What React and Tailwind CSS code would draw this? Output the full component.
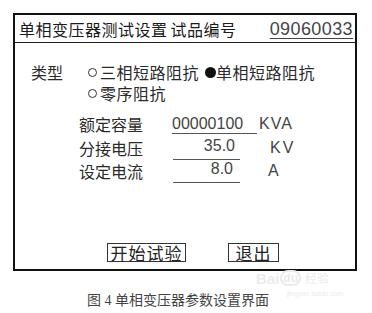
import React from "react";

const cjk = { fontFamily: '"Noto Sans CJK SC", "Noto Sans", sans-serif' };
const num = { fontFamily: '"Liberation Sans", Arial, sans-serif' };

function Hollow() {
  return <span className="inline-block w-[9px] h-[9px] rounded-full border border-[#333] mr-[3px]" />;
}

export default function App() {
  return (
    <div className="relative w-[372px] h-[313px] bg-white overflow-hidden" style={cjk}>
      <div className="pt-[13px] pl-[13px]">
        <div className="w-[344px] h-[258px] border-2 border-[#111] flex flex-col text-[#2a2a2a]">
          {/* header */}
          <div className="h-[28px] border-b border-[#222] flex items-center justify-between pl-[4px] pr-[2px]">
            <span className="text-[16px] tracking-[0.5px] leading-none text-[#1a1a1a]">
              单相变压器测试设置<span className="ml-[3px]">试品编号</span>
            </span>
            <span
              className="text-[18px] leading-none underline underline-offset-[3px] decoration-1 text-[#444] tracking-[0.4px]"
              style={num}
            >
              09060033
            </span>
          </div>

          {/* body */}
          <div className="flex flex-col flex-1 pt-[19px] text-[16px]">
            <div className="flex pl-[16px]">
              <span className="w-[57px] h-[20px] leading-[20px]">类型</span>
              <div className="flex flex-col gap-[1px]">
                <div className="flex items-center h-[20px] leading-[16px] tracking-[0.5px]">
                  <Hollow />
                  <span>三相短路阻抗</span>
                  <span className="inline-block w-[11px] h-[11px] rounded-full bg-[#111] ml-[6px]" />
                  <span>单相短路阻抗</span>
                </div>
                <div className="flex items-center h-[20px] leading-[16px] tracking-[0.5px]">
                  <Hollow />
                  <span>零序阻抗</span>
                </div>
              </div>
            </div>

            <div className="flex flex-col pl-[64px] mt-[9px]">
              <div className="flex items-center h-[24px] leading-[20px]">
                <span className="w-[93px]">额定容量</span>
                <span
                  className="w-[85px] h-[20px] leading-[19px] border-b border-[#555] text-[#444]"
                  style={num}
                >
                  00000100
                </span>
                <span className="ml-[2px] text-[#444] tracking-[1px]" style={num}>KVA</span>
              </div>
              <div className="flex items-center h-[23px] leading-[20px]">
                <span className="w-[94px]">分接电压</span>
                <span
                  className="w-[67px] h-[20px] mt-[4px] leading-[12px] border-b border-[#555] text-right pr-[5px] text-[#444]"
                  style={num}
                >
                  35.0
                </span>
                <span className="ml-[30px] text-[#444] tracking-[2px]" style={num}>KV</span>
              </div>
              <div className="flex items-center h-[24px] leading-[20px]">
                <span className="w-[94px]">设定电流</span>
                <span
                  className="w-[67px] h-[20px] mt-[4px] leading-[12px] border-b border-[#555] text-right pr-[7px] text-[#444]"
                  style={num}
                >
                  8.0
                </span>
                <span className="ml-[28px] text-[#444]" style={num}>A</span>
              </div>
            </div>

            <div className="mt-auto mb-[7px] flex pl-[92px] gap-[42px]">
              <span className="w-[79px] h-[19px] border border-[#333] flex items-center justify-center text-[17px] leading-none tracking-[1px] text-[#222]">
                开始试验
              </span>
              <span className="w-[51px] h-[19px] border border-[#333] flex items-center justify-center text-[17px] leading-none tracking-[1px] text-[#222]">
                退出
              </span>
            </div>
          </div>
        </div>
      </div>

      <div className="pl-[87px] mt-[23px] text-[14px] leading-none text-[#444]" style={{ fontFamily: '"Liberation Serif", "Noto Sans CJK SC", serif' }}>
        图 4 单相变压器参数设置界面
      </div>

      {/* faint watermark */}
      <div className="absolute left-[256px] top-[270px] flex items-center text-[#ebebeb] pointer-events-none" style={num}>
        <span className="text-[15px] font-bold leading-none">Bai</span>
        <span className="text-[12px] font-bold leading-none ml-[1px] rounded-full border-2 border-[#ebebeb] px-[1px]">du</span>
        <span className="text-[12px] leading-none ml-[4px]" style={cjk}>经验</span>
      </div>
      <span className="absolute left-[287px] top-[290px] text-[7px] leading-none text-[#ececec] pointer-events-none" style={num}>
        jingyan.baidu.com
      </span>
    </div>
  );
}
